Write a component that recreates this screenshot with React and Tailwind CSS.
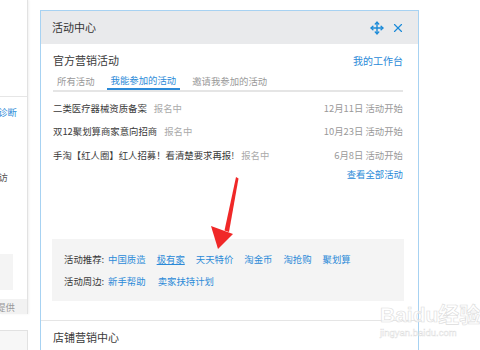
import { Move, X } from 'lucide-react'

const rows = [
  { title: '二类医疗器械资质备案', date: '12月11日' },
  { title: '双12聚划算商家意向招商', date: '10月23日' },
  { title: '手淘【红人圈】红人招募！看清楚要求再报!', date: '6月8日' },
]

const recommend = ['中国质造', '极有家', '天天特价', '淘金币', '淘抢购', '聚划算']
const around = ['新手帮助', '卖家扶持计划']

export default function App() {
  return (
    <div
      className="relative w-[480px] h-[350px] overflow-hidden bg-white flex text-[9.4px] text-[#3a3a3a]"
      style={{ fontFamily: '"Noto Sans CJK SC", "Noto Sans", sans-serif' }}
    >
      {/* left side panel, cut by the window */}
      <div className="w-[28px] shrink-0 flex flex-col">
        <div className="h-[322px] border-r border-[#e2e2e2] shadow-[1px_0_2px_rgba(0,0,0,0.06)] flex flex-col overflow-hidden">
          <div className="h-[97px] border-b border-[#e6e6e6] shrink-0" />
          <div className="flex justify-end pr-[10px] mt-[8px] whitespace-nowrap text-[#2b8ad8]">诊断</div>
          <div className="flex justify-end pr-[19px] mt-[51px] whitespace-nowrap text-[#555]">访</div>
          <div className="w-[13px] h-[36px] bg-[#f4f4f4] mt-[70px]" />
          <div className="flex-1" />
          <div className="h-[15px] bg-[#f2f2f2] flex items-center justify-end pr-[12px] whitespace-nowrap text-[#999]">提供</div>
        </div>
        <div className="mt-[16px] h-[20px] border-t border-r border-[#e2e2e2] bg-[#f7f7f7]" />
      </div>

      {/* modal */}
      <div className="ml-[12px] mt-[10px] w-[379px] h-[360px] shrink-0 border border-[#a7d2f2] bg-white flex flex-col">
        <div className="h-[33px] bg-[#e9eaec] flex items-center justify-between pl-[11px] pr-[13px]">
          <span className="text-[11px] text-[#333]">活动中心</span>
          <div className="flex items-center gap-[7px] text-[#1a8ad8]">
            <Move size={14} strokeWidth={2.4} />
            <X size={14} strokeWidth={2} />
          </div>
        </div>

        <div className="pl-[12px] pr-[15px]">
          <div className="flex items-center justify-between mt-[9px] h-[15px]">
            <span className="text-[11px]">官方营销活动</span>
            <span className="text-[10px] text-[#2b8ad8]">我的工作台</span>
          </div>

          <div className="mt-[5px] flex gap-[8px] border-b-2 border-[#e5e5e5]">
            <span className="px-[4px] h-[17px] flex items-center text-[#999]">所有活动</span>
            <span className="px-[4px] h-[17px] flex items-center text-[#2b8ad8] border-b-2 border-[#2b8ad8] -mb-[2px]">我能参加的活动</span>
            <span className="px-[4px] h-[17px] flex items-center text-[#999]">邀请我参加的活动</span>
          </div>

          <div className="mt-[4px] flex flex-col">
            {rows.map((r) => (
              <div key={r.title} className="h-[23.5px] flex items-center justify-between">
                <div className="flex items-center gap-[7px]">
                  <span>{r.title}</span>
                  <span className="text-[#aaa]">报名中</span>
                </div>
                <span className="text-[#999]">{r.date} 活动开始</span>
              </div>
            ))}
          </div>
          <div className="flex justify-end text-[#2b8ad8]">查看全部活动</div>

          <div className="mt-[58px] -ml-[1px] -mr-[1px] h-[62px] bg-[#f4f4f4] pl-[12px] flex flex-col justify-center gap-[8px]">
            <div className="flex items-center">
              <span className="mr-[4px]">活动推荐:</span>
              <div className="flex gap-[11px] text-[#2b8ad8]">
                {recommend.map((l) => (
                  <span key={l} className={l === '极有家' ? 'underline' : ''}>{l}</span>
                ))}
              </div>
            </div>
            <div className="flex items-center">
              <span className="mr-[4px]">活动周边:</span>
              <div className="flex gap-[12px] text-[#2b8ad8]">
                {around.map((l) => (
                  <span key={l}>{l}</span>
                ))}
              </div>
            </div>
          </div>
        </div>

        <div className="mt-[19px] border-t border-[#e5e5e5] pl-[12px] pt-[8px]">
          <span className="text-[11px]">店铺营销中心</span>
        </div>
      </div>

      {/* annotation arrow */}
      <svg className="absolute left-0 top-0" width="480" height="350" viewBox="0 0 480 350">
        <polygon points="236,177 238.5,178.5 229,232 224.5,230.5" fill="#f02828" />
        <polygon points="211,226 233,234 218,249" fill="#f02828" />
      </svg>

      {/* watermark */}
      <div className="absolute left-[380px] top-[302px] flex flex-col items-start whitespace-nowrap pointer-events-none">
        <span className="text-[21px] leading-[25px] font-bold text-white/70 [-webkit-text-stroke:0.6px_#dcdcdc]" style={{ fontFamily: '"Liberation Sans", "Noto Sans CJK SC", sans-serif' }}>
          Baidu经验
        </span>
        <span className="text-[9.5px] leading-[12px] text-white/70 [-webkit-text-stroke:0.4px_#dcdcdc]" style={{ fontFamily: '"Liberation Sans", sans-serif' }}>
          jingyan.baidu.com
        </span>
      </div>
    </div>
  )
}
